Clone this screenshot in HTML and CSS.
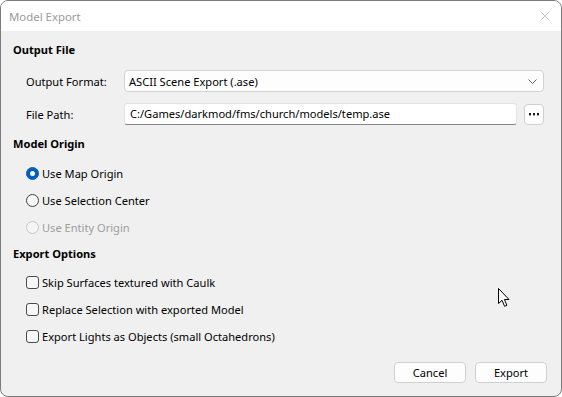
FILE: index.html
```html
<!DOCTYPE html>
<html lang="en">
<head>
    <meta charset="UTF-8">
    <meta name="viewport" content="width=device-width, initial-scale=1.0">
    <title>Model Export</title>
    <link rel="stylesheet" href="styles.css">
</head>

<body>
    <div class="window">
        <div class="titlebar">
            <span class="title">Model Export</span>
            <svg class="close" width="10" height="10" viewBox="0 0 10 10">
                <path d="M0.5 0.5 L9.5 9.5 M9.5 0.5 L0.5 9.5" stroke="#c8c8c8" stroke-width="1"/>
            </svg>
        </div>

        <div class="content">
            <div class="section-title">Output File</div>

            <div class="field-row first">
                <label>Output Format:</label>
                <div class="combo">
                    <span>ASCII Scene Export (.ase)</span>
                    <svg width="9" height="5" viewBox="0 0 9 5">
                        <path d="M0.5 0.5 L4.5 4.5 L8.5 0.5" fill="none" stroke="#606060" stroke-width="1"/>
                    </svg>
                </div>
            </div>

            <div class="field-row">
                <label>File Path:</label>
                <div class="path-group">
                    <div class="text-input">C:/Games/darkmod/fms/church/models/temp.ase</div>
                    <button class="browse">
                        <svg width="10" height="3" viewBox="0 0 10 3">
                            <rect x="0" y="0" width="2" height="2.4" fill="#1a1a1a"/>
                            <rect x="4" y="0" width="2" height="2.4" fill="#1a1a1a"/>
                            <rect x="8" y="0" width="2" height="2.4" fill="#1a1a1a"/>
                        </svg>
                    </button>
                </div>
            </div>

            <div class="section-title second">Model Origin</div>

            <div class="options radios">
                <div class="option"><span class="radio checked"></span>Use Map Origin</div>
                <div class="option"><span class="radio"></span>Use Selection Center</div>
                <div class="option disabled"><span class="radio"></span>Use Entity Origin</div>
            </div>

            <div class="section-title third">Export Options</div>

            <div class="options checks">
                <div class="option"><span class="checkbox"></span>Skip Surfaces textured with Caulk</div>
                <div class="option"><span class="checkbox"></span>Replace Selection with exported Model</div>
                <div class="option"><span class="checkbox"></span>Export Lights as Objects (small Octahedrons)</div>
            </div>

            <div class="buttons">
                <button class="btn">Cancel</button>
                <button class="btn">Export</button>
            </div>
        </div>

        <!-- mouse pointer left in the screenshot -->
        <svg class="pointer" width="13" height="20" viewBox="0 0 13 20">
            <path d="M0.5 0.5 L0.5 15.5 L4 12.3 L6.6 18.3 L8.9 17.3 L6.4 11.5 L11 11.5 Z" fill="#fff" stroke="#000" stroke-width="1" stroke-linejoin="miter"/>
        </svg>
    </div>
</body>
</html>
```

FILE: styles.css
```css
html, body {
    margin: 0;
    padding: 0;
    background: #ffffff;
}

body {
    font-family: 'Noto Sans', 'Open Sans', sans-serif;
    font-size: 11.1px;
    color: #000;
}

.window {
    position: relative;
    box-sizing: border-box;
    width: 562px;
    height: 397px;
    border: 1px solid #7c7c7c;
    border-radius: 8px;
    overflow: hidden;
    background: #f0f0f0;
    display: flex;
    flex-direction: column;
}

.titlebar {
    height: 30px;
    background: #ffffff;
    display: flex;
    align-items: center;
    justify-content: space-between;
    padding: 0 11px 0 8px;
    flex-shrink: 0;
}

.title {
    color: #9a9a9a;
    font-size: 11.4px;
}

.content {
    padding: 9px 13px 0 12px;
}

.section-title {
    font-weight: bold;
    height: 20px;
    line-height: 20px;
}

.section-title.second {
    margin-top: 9px;
}

.section-title.third {
    margin-top: 7px;
}

.field-row {
    display: grid;
    grid-template-columns: 98px 1fr;
    align-items: center;
    height: 22px;
    margin-top: 11px;
    padding-left: 13px;
    padding-right: 4px;
}

.field-row.first {
    margin-top: 10px;
}

.combo {
    box-sizing: border-box;
    height: 22px;
    background: #fdfdfd;
    border: 1px solid #d3d3d3;
    border-radius: 4px;
    display: flex;
    align-items: center;
    justify-content: space-between;
    padding: 0 6px 0 4px;
}

.path-group {
    display: flex;
    gap: 7px;
    align-items: center;
}

.text-input {
    box-sizing: border-box;
    flex: 1;
    height: 22px;
    line-height: 20px;
    background: #ffffff;
    border: 1px solid #e3e3e3;
    border-bottom-color: #868686;
    border-radius: 3px;
    padding: 0 5px;
}

.browse {
    box-sizing: border-box;
    width: 20px;
    height: 21px;
    padding: 0;
    background: #fdfdfd;
    border: 1px solid #d0d0d0;
    border-radius: 4px;
    display: flex;
    align-items: center;
    justify-content: center;
}

.options {
    display: flex;
    flex-direction: column;
    gap: 7px;
    padding-left: 13px;
}

.radios {
    margin-top: 9px;
}

.checks {
    margin-top: 8px;
}

.option {
    height: 20px;
    display: flex;
    align-items: center;
}

.option.disabled {
    color: #9d9d9d;
}

.radio {
    box-sizing: border-box;
    width: 13px;
    height: 13px;
    border: 1px solid #3f3f3f;
    border-radius: 50%;
    background: #f7f7f7;
    margin-right: 3px;
    position: relative;
}

.radio.checked {
    background: #005fb8;
    border-color: #005fb8;
}

.radio.checked::after {
    content: '';
    position: absolute;
    left: 3px;
    top: 3px;
    width: 5px;
    height: 5px;
    border-radius: 50%;
    background: #fff;
}

.disabled .radio {
    border-color: #c6c6c6;
    background: #f5f5f5;
}

.checkbox {
    box-sizing: border-box;
    width: 13px;
    height: 13px;
    border: 1px solid #4a4a4a;
    border-radius: 3px;
    background: #f7f7f7;
    margin-right: 3px;
}

.buttons {
    display: flex;
    justify-content: flex-end;
    gap: 9px;
    margin-top: 16px;
    padding-right: 1px;
}

.btn {
    box-sizing: border-box;
    width: 72px;
    height: 21px;
    padding: 0;
    font-family: inherit;
    font-size: 11.1px;
    color: #000;
    background: #fdfdfd;
    border: 1px solid #d0d0d0;
    border-radius: 4px;
}

.pointer {
    position: absolute;
    left: 497px;
    top: 287px;
}
```
